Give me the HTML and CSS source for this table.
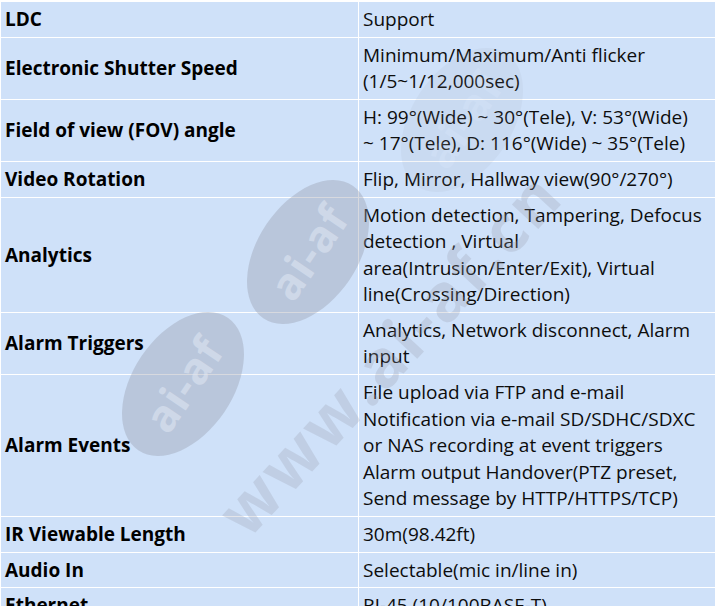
FILE: index.html
```html
<!DOCTYPE html>
<html>
<head>
<meta charset="utf-8">
<link rel="stylesheet" href="styles.css">
</head>
<body>
<div class="wrap">
<table class="spec">
<colgroup><col class="c1"><col class="c2"></colgroup>
<tbody>
<tr><th>LDC</th><td>Support</td></tr>
<tr><th>Electronic Shutter Speed</th><td>Minimum/Maximum/Anti flicker (1/5~1/12,000sec)</td></tr>
<tr><th>Field of view (FOV) angle</th><td>H: 99°(Wide) ~&nbsp;30°(Tele), V: 53°(Wide) ~&nbsp;17°(Tele), D: 116°(Wide) ~&nbsp;35°(Tele)</td></tr>
<tr><th>Video Rotation</th><td>Flip, Mirror, Hallway view(90°/270°)</td></tr>
<tr><th>Analytics</th><td>Motion detection, Tampering, Defocus detection , Virtual area(Intrusion/Enter/Exit), Virtual line(Crossing/Direction)</td></tr>
<tr><th>Alarm Triggers</th><td>Analytics, Network disconnect, Alarm input</td></tr>
<tr><th>Alarm Events</th><td>File upload via FTP and e-mail Notification via e-mail SD/SDHC/SDXC or NAS recording at event triggers Alarm output Handover(PTZ preset, Send message by HTTP/HTTPS/TCP)</td></tr>
<tr><th>IR Viewable Length</th><td>30m(98.42ft)</td></tr>
<tr><th>Audio In</th><td>Selectable(mic in/line in)</td></tr>
<tr><th>Ethernet</th><td>RJ-45 (10/100BASE-T)</td></tr>
</tbody>
</table>
<div class="wm" aria-hidden="true">
  <div class="oval o1"><span>ai-af</span></div>
  <div class="oval o2"><span>ai-af</span></div>
  <div class="oval o3"><span>ai-af</span></div>
  <div class="url">www.ai-af.cn</div>
</div>
</div>
</body>
</html>
```
FILE: styles.css
```css
html, body {
  margin: 0;
  padding: 0;
  background: #ffffff;
  overflow: hidden;
}
.wrap {
  position: relative;
  width: 715px;
  padding-top: 1px;
}
.spec {
  border-collapse: collapse;
  width: 717px;
  table-layout: fixed;
  font-family: "Open Sans", "Noto Sans", sans-serif;
  font-size: 19px;
  line-height: 26.5px;
  color: #0d0d0d;
}
.c1 { width: 358px; }
.spec th, .spec td {
  background: #cfe1f9;
  border: 1px solid #ffffff;
  padding: 4px 5px 4.2px 4px;
  text-align: left;
  vertical-align: middle;
}
.spec th {
  font-weight: 700;
  color: #000;
}
.wm {
  position: absolute;
  inset: 0;
  pointer-events: none;
  overflow: hidden;
}
.oval {
  position: absolute;
  width: 160px;
  height: 100px;
  border-radius: 50%;
  background: rgba(150, 155, 170, 0.38);
  display: flex;
  align-items: center;
  justify-content: center;
  transform: rotate(-56deg);
}
.oval span {
  font-family: "Open Sans", sans-serif;
  font-weight: 700;
  font-size: 44px;
  color: rgba(225, 232, 245, 0.55);
  letter-spacing: 1px;
}
.o1 { left: 228px; top: 202px; }
.o2 { left: 103px; top: 334px; }
.o3 { left: 382px; top: 70px; opacity: 0.25; }
.url {
  position: absolute;
  left: 196px;
  top: 492px;
  font-family: "Open Sans", sans-serif;
  font-weight: 700;
  font-size: 66px;
  line-height: 90px;
  letter-spacing: 3px;
  color: rgba(150, 155, 170, 0.26);
  transform: rotate(-47deg);
  transform-origin: 0 0;
  white-space: nowrap;
}
```
